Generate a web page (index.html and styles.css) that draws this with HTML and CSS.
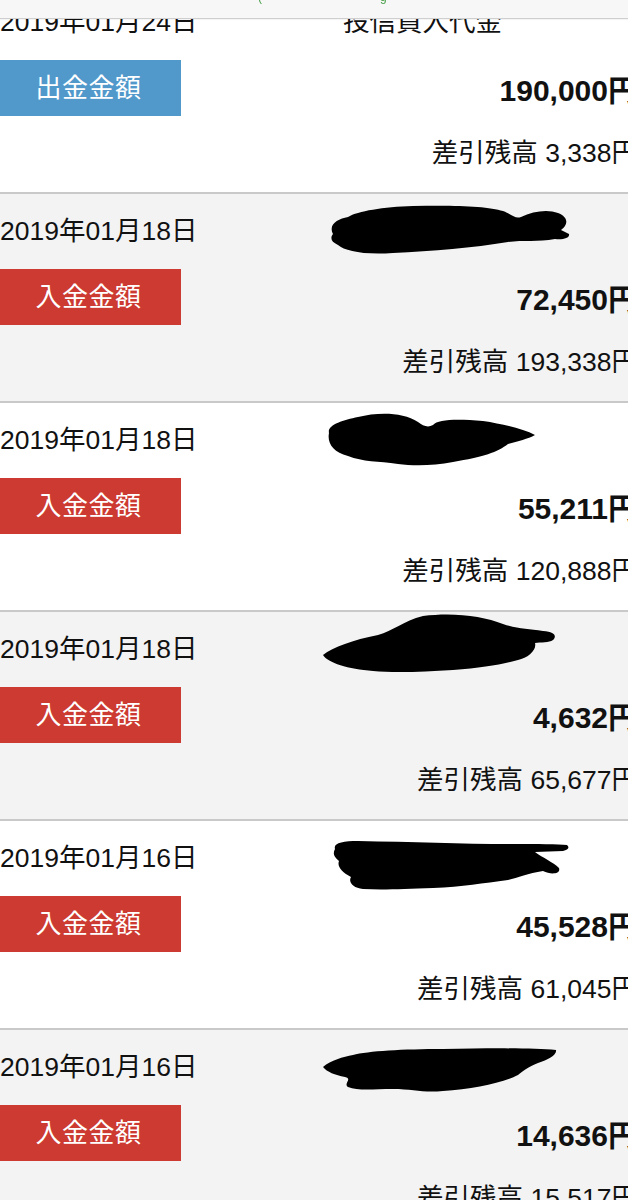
FILE: index.html
```html
<!DOCTYPE html>
<html lang="ja">
<head>
<meta charset="utf-8">
<title>入出金明細</title>
<link rel="stylesheet" href="styles.css">
</head>
<body>
<div class="topbar"><span class="url-bit">(</span><span class="url-bit">g</span></div>
<div class="list">
  <div class="entry entry-white">
    <div class="date">2019年01月24日</div>
    <div class="desc">投信買入代金</div>
    <div class="badge badge-out">出金金額</div>
    <div class="amount">190,000円</div>
    <div class="balance">差引残高 3,338円</div>
  </div>

  <div class="entry entry-gray">
    <div class="date">2019年01月18日</div>
    <div class="desc desc-hidden"><svg class="scribble" viewBox="0 0 317 75" width="317" height="75"><path d="M10,40 C5,30 15,25 25,23 C35,17 60,13 90,12 C130,11 165,12 180,17 C190,21 192,25 198,23 C210,17 225,15 235,19 C245,23 246,30 238,36 L246,40 C247,44 240,46 232,45 C215,48 200,46 185,48 C150,54 110,57 70,59 C40,61 22,57 15,51 C8,48 7,44 10,40 Z"/></svg></div>
    <div class="badge badge-in">入金金額</div>
    <div class="amount">72,450円</div>
    <div class="balance">差引残高 193,338円</div>
  </div>

  <div class="entry entry-white">
    <div class="date">2019年01月18日</div>
    <div class="desc desc-hidden"><svg class="scribble" viewBox="0 0 317 75" width="317" height="75"><path d="M6,30 C4,22 20,17 35,14 C55,9 80,9 95,19 C100,23 105,25 110,22 C115,16 135,16 160,18 C180,21 200,26 212,32 C205,36 195,38 185,41 C175,49 160,54 130,59 C110,63 90,63 75,61 C55,58 40,59 25,53 C10,49 4,40 6,30 Z"/></svg></div>
    <div class="badge badge-in">入金金額</div>
    <div class="amount">55,211円</div>
    <div class="balance">差引残高 120,888円</div>
  </div>

  <div class="entry entry-gray">
    <div class="date">2019年01月18日</div>
    <div class="desc desc-hidden"><svg class="scribble" viewBox="0 0 317 75" width="317" height="75"><path d="M0,43 C10,35 30,28 55,23 C70,19 80,9 100,4 C130,0 160,4 180,12 C195,17 205,17 220,19 C232,20 234,24 230,28 C226,31 218,30 212,31 C214,38 205,46 195,48 C180,52 160,56 130,58 C100,60 70,61 50,59 C25,57 5,51 0,43 Z"/></svg></div>
    <div class="badge badge-in">入金金額</div>
    <div class="amount">4,632円</div>
    <div class="balance">差引残高 65,677円</div>
  </div>

  <div class="entry entry-white">
    <div class="date">2019年01月16日</div>
    <div class="desc desc-hidden"><svg class="scribble" viewBox="0 0 317 75" width="317" height="75"><path d="M12,28 C10,22 20,20 35,20 C90,21 140,23 190,23 C215,23 235,23 244,24 C247,27 245,29 240,30 L212,31 C220,37 230,41 236,47 C238,53 228,54 220,50 C205,52 195,57 185,59 C160,62 140,66 110,67 C80,68 60,69 40,68 C30,67 25,61 28,56 C18,51 14,45 16,40 C10,35 10,32 12,28 Z"/></svg></div>
    <div class="badge badge-in">入金金額</div>
    <div class="amount">45,528円</div>
    <div class="balance">差引残高 61,045円</div>
  </div>

  <div class="entry entry-gray">
    <div class="date">2019年01月16日</div>
    <div class="desc desc-hidden"><svg class="scribble" viewBox="0 0 317 75" width="317" height="75"><path d="M0,37 C8,30 20,27 30,25 C45,21 80,19 120,19 C170,18 210,18 233,20 C234,25 225,30 215,33 C205,37 200,41 195,45 C180,53 150,59 120,61 C100,63 90,59 70,59 C50,59 35,61 25,57 C20,53 30,49 22,47 C12,45 4,42 0,37 Z"/></svg></div>
    <div class="badge badge-in">入金金額</div>
    <div class="amount">14,636円</div>
    <div class="balance">差引残高 15,517円</div>
  </div>
</div>
</body>
</html>
```

FILE: styles.css
```css
html, body {
  margin: 0;
  padding: 0;
  overflow: hidden;
  background: #ffffff;
}

body {
  font-family: "Liberation Sans", "Noto Sans CJK JP", sans-serif;
  color: #111111;
  width: 628px;
  height: 1200px;
}

.topbar {
  position: fixed;
  top: 0;
  left: 0;
  right: 0;
  height: 18px;
  background: #f7f7f7;
  border-bottom: 1px solid #cfcfcf;
  box-shadow: 0 1px 1px rgba(0, 0, 0, 0.04);
  z-index: 10;
  display: flex;
  gap: 118px;
  padding-left: 258px;
  overflow: hidden;
}

.url-bit {
  color: #4aa04a;
  font-size: 12px;
  line-height: 12px;
  margin-top: -9px;
}

.list {
  margin-left: -4px;
  margin-top: -15px;
  width: 644px;
}

.entry {
  display: grid;
  grid-template-columns: 327px 1fr;
  grid-template-rows: 75px 56px 76px;
  border-bottom: 2px solid #c9c9c9;
}

.entry-white {
  background: #ffffff;
}

.entry-gray {
  background: #f3f3f3;
}

.date {
  grid-column: 1;
  grid-row: 1;
  font-size: 26.5px;
  line-height: 32px;
  padding-top: 21px;
  padding-left: 4px;
  white-space: nowrap;
}

.desc {
  grid-column: 2;
  grid-row: 1;
  font-size: 26.5px;
  line-height: 32px;
  padding-top: 21px;
  padding-left: 20px;
  white-space: nowrap;
}

.desc-hidden {
  padding: 0;
}

.scribble {
  display: block;
  fill: #000000;
}

.badge {
  grid-column: 1;
  grid-row: 2;
  width: 185px;
  height: 56px;
  color: #ffffff;
  font-size: 26px;
  line-height: 56px;
  text-align: center;
  letter-spacing: 0.5px;
}

.badge-out {
  background: #5198cb;
}

.badge-in {
  background: #cc3a31;
}

.amount {
  grid-column: 2;
  grid-row: 2;
  text-align: right;
  font-size: 30px;
  font-weight: bold;
  line-height: 36px;
  padding-top: 13px;
  padding-right: 2px;
  white-space: nowrap;
}

.balance {
  grid-column: 1 / 3;
  grid-row: 3;
  text-align: right;
  font-size: 26.5px;
  line-height: 32px;
  padding-top: 21px;
  padding-right: 2px;
  white-space: nowrap;
}
```
